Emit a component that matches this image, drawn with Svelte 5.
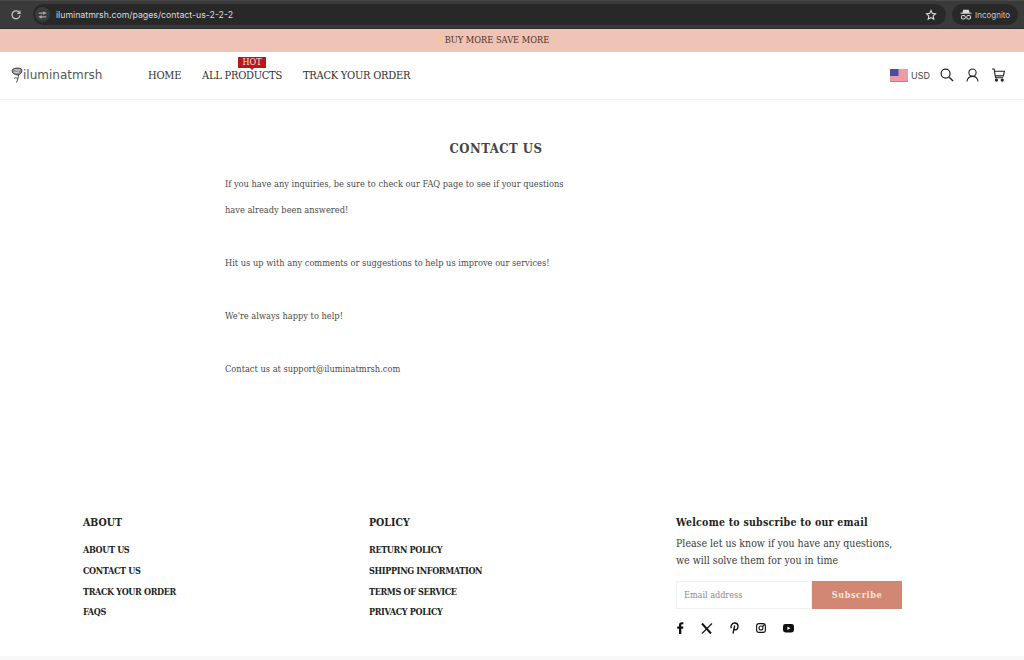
<script>
  const nav = [
    { label: 'HOME' },
    { label: 'ALL PRODUCTS', badge: 'HOT' },
    { label: 'TRACK YOUR ORDER' }
  ];
  const paragraphs = [
    ['If you have any inquiries, be sure to check our FAQ page to see if your questions', 'have already been answered!'],
    ['Hit us up with any comments or suggestions to help us improve our services!'],
    ["We're always happy to help!"],
    ['Contact us at support@iluminatmrsh.com']
  ];
  const columns = [
    { title: 'ABOUT', width: 286, links: ['ABOUT US', 'CONTACT US', 'TRACK YOUR ORDER', 'FAQS'] },
    { title: 'POLICY', width: 307, links: ['RETURN POLICY', 'SHIPPING INFORMATION', 'TERMS OF SERVICE', 'PRIVACY POLICY'] }
  ];
</script>

<div class="page">
  <div class="chrome">
    <svg class="reload" width="12" height="12" viewBox="0 0 12 12" fill="none" stroke="#c4c4c4" stroke-width="1.3">
      <path d="M9.6 4A4 4 0 1 0 10 6.2" />
      <path d="M10 1.6V4.4H7.2" stroke-width="1.1" />
    </svg>
    <div class="url-pill">
      <span class="tune">
        <svg width="9" height="8" viewBox="0 0 12 10" fill="none" stroke="#d0d0d0" stroke-width="1.2">
          <path d="M1 2.5h5M9.5 2.5H11M1 7.5h1.5M6 7.5h5" />
          <circle cx="7.8" cy="2.5" r="1.3" />
          <circle cx="4.2" cy="7.5" r="1.3" />
        </svg>
      </span>
      <span class="url">iluminatmrsh.com/pages/contact-us-2-2-2</span>
      <svg class="star" width="12" height="12" viewBox="0 0 24 24" fill="none" stroke="#dadada" stroke-width="2.2">
        <path d="M12 3l2.7 5.8 6.3.8-4.6 4.3 1.200 6.300L12 17.100 6.400 20.200l1.200-6.300L3 9.600l6.300-.8z" />
      </svg>
    </div>
    <div class="incognito">
      <svg width="12" height="11" viewBox="0 0 13 12" fill="#d8d8d8">
        <path d="M3.500 .8h6l1 3.400H12.500v1H.5v-1h2z" />
        <rect x="1.500" y="7" width="4.200" height="3.800" rx="1.600" fill="none" stroke="#d8d8d8" stroke-width="1.100" />
        <rect x="7.300" y="7" width="4.200" height="3.800" rx="1.600" fill="none" stroke="#d8d8d8" stroke-width="1.100" />
      </svg>
      <span>Incognito</span>
    </div>
  </div>

  <div class="banner">BUY MORE SAVE MORE</div>

  <header class="header">
    <div class="logo">
      <svg width="12" height="16" viewBox="0 0 12 16" fill="none" stroke="#444" stroke-width="1">
        <path d="M1.500 2.500C3 .8 8 .6 10.500 2 11.500 4 10.500 6.500 8.500 7.500 6 8.500 3 7.500 1.500 5.500 1 4.500 1 3.500 1.500 2.500z" fill="#8a8a8a" />
        <path d="M3.500 2.500c2 .6 3.800 .8 5.500 .3M3 5c2 .6 3.500 .6 5-.1" stroke="#fff" stroke-width=".8" />
        <path d="M7.500 8C7.200 10.500 6.800 12.500 5.500 15.500M6.600 11.500c-1.200-.8-2.200-.8-3.400-.3" />
      </svg>
      <span>iluminatmrsh</span>
    </div>
    <nav class="nav">
      {#each nav as item}
        <span class="nav-item">
          {item.label}
          {#if item.badge}
            <span class="badge">{item.badge}</span>
          {/if}
        </span>
      {/each}
    </nav>
    <div class="tools">
      <svg class="flag" width="18" height="13" viewBox="0 0 18 13">
        <rect width="18" height="13" fill="#f6c5c9" />
        <path d="M0 1h18M0 3h18M0 5h18M0 7h18M0 9h18M0 11h18M0 12.500h18" stroke="#e8707c" stroke-width="1" />
        <rect width="8.500" height="7" fill="#4a4aa8" />
      </svg>
      <span class="currency">USD</span>
      <svg class="search" width="14" height="14" viewBox="0 0 15 15" fill="none" stroke="#222" stroke-width="1.300">
        <circle cx="6" cy="6" r="4.800" />
        <path d="M9.600 9.600L14 14" stroke-width="1.500" />
      </svg>
      <svg class="user" width="13" height="14" viewBox="0 0 14 15" fill="none" stroke="#222" stroke-width="1.200">
        <circle cx="7" cy="5" r="3.900" />
        <path d="M1 14.500C1.500 11 3.500 9 7 9s5.500 2 6 5.500" />
      </svg>
      <svg class="cart" width="13" height="14" viewBox="0 0 14 15" fill="none" stroke="#222" stroke-width="1.200">
        <path d="M0 1h2.300l1.500 9.500h8.200" />
        <path d="M2.800 3.500h10.500l-1 5H3.600" />
        <circle cx="4.800" cy="13" r="1.100" fill="#222" />
        <circle cx="11" cy="13" r="1.100" fill="#222" />
      </svg>
    </div>
  </header>

  <main class="main">
    <h1>CONTACT US</h1>
    {#each paragraphs as lines}
      <div class="para">
        {#each lines as line}
          <p>{line}</p>
        {/each}
      </div>
    {/each}
  </main>

  <footer class="footer">
    {#each columns as col}
      <div class="col" style="width: {col.width}px">
        <h3>{col.title}</h3>
        <ul>
          {#each col.links as link}
            <li>{link}</li>
          {/each}
        </ul>
      </div>
    {/each}
    <div class="subscribe">
      <h4>Welcome to subscribe to our email</h4>
      <p>Please let us know if you have any questions,<br />we will solve them for you in time</p>
      <div class="form">
        <span class="input">Email address</span>
        <span class="button">Subscribe</span>
      </div>
      <div class="social">
        <svg width="7" height="12" viewBox="0 0 7 12" fill="#111">
          <path d="M2 12V6.700H.2V4.600H2V3C2 1.200 3.100.2 4.700.2c.8 0 1.500.1 1.700.1v1.900H5.300c-.9 0-1 .4-1 1v1.400h2.100l-.3 2.100H4.300V12z" />
        </svg>
        <svg width="12" height="11" viewBox="0 0 12 11" fill="none" stroke="#111">
          <path d="M1 .5L10 10.500" stroke-width="2" />
          <path d="M11 .5L1 10.500" stroke-width="1.100" />
        </svg>
        <svg width="9" height="12" viewBox="0 0 9 12" fill="none" stroke="#111" stroke-width="1.400">
          <path d="M1.300 6.300C.4 4 1.800 1 4.700 1 7 1 8 2.600 8 4.200 8 6.300 6.800 7.700 5.300 7.700 4.500 7.700 4 7.200 3.800 6.800" />
          <path d="M4.700 3.500L3 11.500" />
        </svg>
        <svg width="10" height="10" viewBox="0 0 10 10" fill="none" stroke="#111" stroke-width="1.100">
          <rect x=".6" y=".6" width="8.800" height="8.800" rx="2.400" />
          <circle cx="5" cy="5" r="2" />
          <circle cx="7.500" cy="2.500" r=".4" fill="#111" />
        </svg>
        <svg width="11" height="9" viewBox="0 0 11 9">
          <rect width="11" height="8.500" rx="2.400" fill="#111" />
          <path d="M4.400 2.500L7.400 4.250 4.400 6z" fill="#fff" />
        </svg>
      </div>
    </div>
  </footer>
  <div class="bottom"></div>
</div>

<style>
  :global(body) {
    margin: 0;
    background: #fff;
  }

  .page {
    width: 1024px;
    height: 660px;
    overflow: hidden;
    font-family: "DejaVu Serif Condensed", "DejaVu Serif", serif;
    color: #333;
    display: flex;
    flex-direction: column;
  }

  .chrome {
    height: 29px;
    box-sizing: border-box;
    flex-shrink: 0;
    background: #3a3a3a;
    border-top: 1px solid #4a4a4a;
    border-bottom: 1px solid #2c2c2c;
    display: flex;
    align-items: center;
    padding: 0 6px 0 10px;
    font-family: Inter, "Liberation Sans", sans-serif;
  }

  .reload {
    margin-right: 11px;
  }

  .url-pill {
    flex: 1;
    height: 21px;
    background: #282828;
    border-radius: 11px;
    display: flex;
    align-items: center;
    padding-right: 9px;
    margin-right: 6px;
  }

  .tune {
    width: 15px;
    height: 15px;
    margin-left: 2px;
    border-radius: 50%;
    background: #3b3b3b;
    display: flex;
    align-items: center;
    justify-content: center;
  }

  .url {
    margin-left: 6px;
    flex: 1;
    font-size: 8.750px;
    color: #dcdcdc;
  }

  .incognito {
    width: 66px;
    height: 21px;
    background: #282828;
    border-radius: 11px;
    display: flex;
    align-items: center;
    padding-left: 8px;
    box-sizing: border-box;
    gap: 3px;
    font-size: 8px;
    color: #c8c8c8;
  }

  .banner {
    height: 23px;
    box-sizing: border-box;
    flex-shrink: 0;
    background: #efc4b6;
    display: flex;
    align-items: center;
    justify-content: center;
    gap: 4px;
    padding: 0 30px 2px 0;
    font-size: 9.200px;
    color: #4a3028;
  }

  .banner::before,
  .banner::after {
    content: "";
    width: 3px;
    height: 7px;
    background: #f1c79f;
  }

  .header {
    height: 48px;
    box-sizing: border-box;
    flex-shrink: 0;
    border-bottom: 1px solid #f1f1f1;
    display: flex;
    align-items: center;
    padding: 0 19px 1px 11px;
  }

  .logo {
    width: 137px;
    display: flex;
    align-items: center;
    gap: 0;
    font-family: "DejaVu Sans", sans-serif;
    font-size: 12px;
    color: #555;
  }

  .nav {
    display: flex;
    gap: 21px;
    font-size: 11px;
    letter-spacing: -.25px;
    color: #2f2f2f;
  }

  .nav-item {
    position: relative;
  }

  .badge {
    position: absolute;
    left: 36px;
    top: -12px;
    width: 28px;
    height: 11px;
    background: #b51a1a;
    color: #f3e3e3;
    font-size: 9px;
    letter-spacing: 0;
    line-height: 11px;
    text-align: center;
  }

  .badge::after {
    content: "";
    position: absolute;
    left: 12px;
    bottom: -2px;
    border: 2px solid transparent;
    border-top-color: #b51a1a;
    border-bottom: 0;
  }

  .tools {
    margin-left: auto;
    display: flex;
    align-items: center;
  }

  .currency {
    margin-left: 3px;
    font-family: Inter, "Liberation Sans", sans-serif;
    font-size: 9px;
    color: #444;
  }

  .search {
    margin-left: 10px;
  }

  .user {
    margin-left: 12px;
  }

  .cart {
    margin-left: 13px;
  }

  .main {
    height: 405px;
    flex-shrink: 0;
    padding: 39px 0 0 225px;
    box-sizing: border-box;
  }

  h1 {
    margin: 0 0 12px;
    width: 542px;
    text-align: center;
    font-size: 13px;
    line-height: 20px;
    letter-spacing: .5px;
    font-weight: 700;
    color: #444;
  }

  .para {
    margin-bottom: 27px;
  }

  .para p {
    margin: 0;
    font-size: 9.200px;
    line-height: 26px;
    color: #4a4a4a;
  }

  .footer {
    flex: 1;
    display: flex;
    padding: 9px 0 0 83px;
    box-sizing: border-box;
  }

  .col h3 {
    margin: 0 0 14px;
    font-size: 10.500px;
    line-height: 16px;
    font-weight: 700;
    color: #222;
  }

  .col ul {
    margin: 0;
    padding: 0;
    list-style: none;
    display: flex;
    flex-direction: column;
    gap: 7.800px;
  }

  .col li {
    font-size: 9px;
    line-height: 13px;
    letter-spacing: -.35px;
    font-weight: 700;
    color: #222;
  }

  .subscribe {
    width: 226px;
  }

  .subscribe h4 {
    margin: 0 0 5px;
    font-size: 10.500px;
    line-height: 16px;
    font-weight: 700;
    letter-spacing: .25px;
    color: #222;
  }

  .subscribe p {
    margin: 0;
    font-size: 10.500px;
    line-height: 17px;
    color: #3a3a3a;
  }

  .form {
    margin-top: 12px;
    height: 28px;
    display: flex;
  }

  .input {
    flex: 1;
    box-sizing: border-box;
    border: 1px solid #f1f1f1;
    padding-left: 7px;
    display: flex;
    align-items: center;
    font-size: 9px;
    color: #8a8a8a;
  }

  .button {
    width: 90px;
    background: #d18772;
    color: #f7e6e0;
    display: flex;
    align-items: center;
    justify-content: center;
    font-size: 9px;
    font-weight: 700;
    letter-spacing: .6px;
  }

  .social {
    margin-top: 12px;
    height: 14px;
    display: flex;
    align-items: center;
    gap: 17px;
    padding-left: 1px;
  }

  .bottom {
    height: 4px;
    flex-shrink: 0;
    background: #f8f8f8;
  }
</style>
